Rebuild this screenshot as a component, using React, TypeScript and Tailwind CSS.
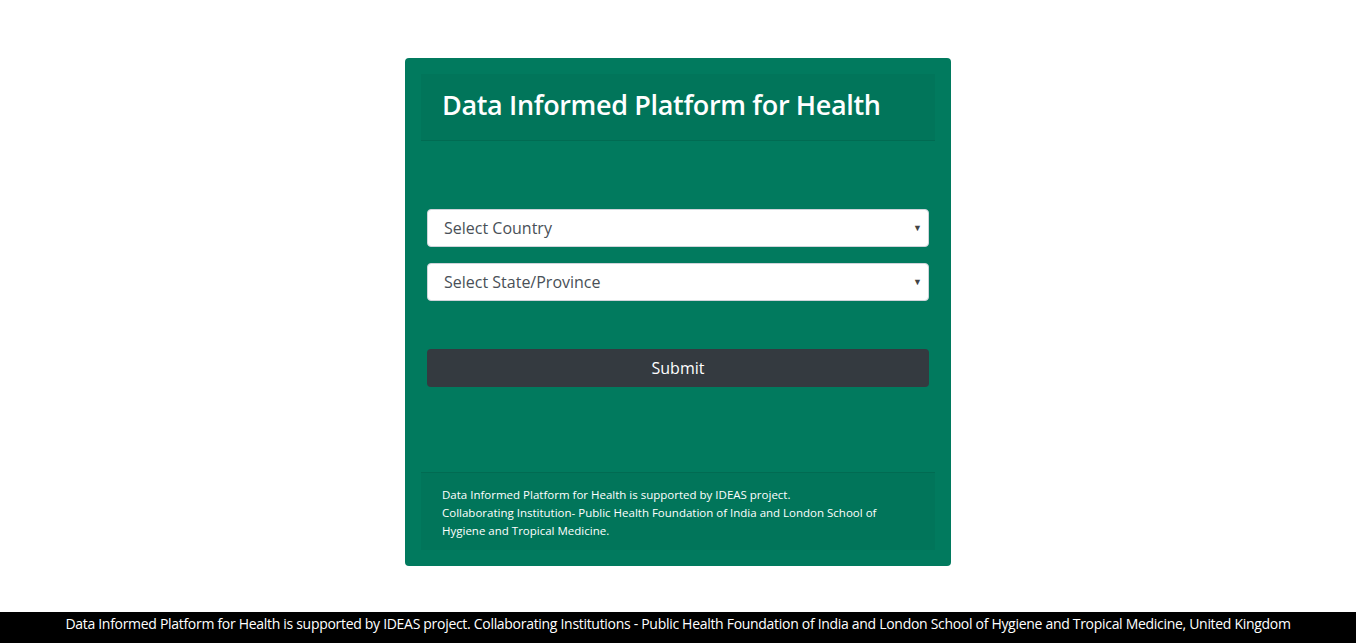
import { useState } from "react";

const FONT = "font-['Open_Sans','Noto_Sans',sans-serif]";

function SelectBox({ label }: { label: string }) {
  return (
    <div className="relative">
      <select
        defaultValue=""
        className="h-[38px] w-full appearance-none rounded-[4px] border border-[#ced4da] bg-white pl-4 pr-8 text-[16px] text-[#495057] outline-none"
      >
        <option value="">{label}</option>
      </select>
      <span className="pointer-events-none absolute right-[7px] top-1/2 -translate-y-1/2 text-[9px] text-[#444]">▼</span>
    </div>
  );
}

export default function App() {
  const [, setSent] = useState(false);

  return (
    <div className={`flex h-[643px] flex-col bg-white ${FONT}`}>
      <main className="flex flex-1 justify-center pt-[58px]">
        <div className="flex h-[508px] w-[546px] flex-col rounded-[4px] bg-[#017a5e] p-4">
          <div className="flex h-[67px] items-center border-b border-[#016b52] bg-[#01755a] px-[21px] pb-[4px]">
            <h1 className="text-[27px] font-semibold tracking-[-0.35px] text-white">Data Informed Platform for Health</h1>
          </div>

          <form
            className="flex flex-1 flex-col px-[6px] pt-[68px]"
            onSubmit={(e) => {
              e.preventDefault();
              setSent(true);
            }}
          >
            <div className="flex flex-col gap-4">
              <SelectBox label="Select Country" />
              <SelectBox label="Select State/Province" />
            </div>
            <button
              type="submit"
              className="mt-[48px] h-[38px] w-full rounded-[4px] bg-[#343a40] text-[16px] text-white"
            >
              Submit
            </button>
          </form>

          <div className="h-[78px] border-t border-[#016b52] bg-[#01755a] px-[21px] pt-[13px] text-[11.5px] leading-[18px] text-white">
            <p>Data Informed Platform for Health is supported by IDEAS project.</p>
            <p>Collaborating Institution- Public Health Foundation of India and London School of Hygiene and Tropical Medicine.</p>
          </div>
        </div>
      </main>

      <footer className="flex h-[31px] items-start justify-center bg-black pt-[1px] text-[14px] tracking-[-0.3px] text-white">
        Data Informed Platform for Health is supported by IDEAS project. Collaborating Institutions - Public Health Foundation of India and London School of Hygiene and Tropical Medicine, United Kingdom
      </footer>
    </div>
  );
}
